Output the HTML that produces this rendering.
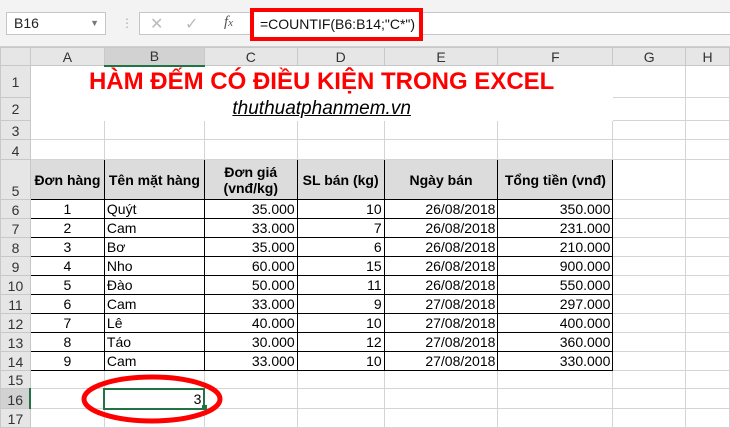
<!DOCTYPE html><html><head><meta charset="utf-8"><style>
body{margin:0;width:730px;height:427px;overflow:hidden;background:#fff;font-family:"Liberation Sans",Arial,sans-serif;position:relative}
.top{position:absolute;left:0;top:0;width:730px;height:47px;background:#f3f3f3;border-bottom:1px solid #d0d0d0;box-sizing:border-box}
.nb{position:absolute;left:6px;top:12px;width:100px;height:23px;background:#fff;border:1px solid #c6c6c6;box-sizing:border-box;font-size:14px;line-height:21px;padding-left:7px;color:#222}
.fb{position:absolute;left:139px;top:12px;width:600px;height:23px;background:#fff;border:1px solid #c6c6c6;box-sizing:border-box}
table{position:absolute;left:0;top:47px;border-collapse:collapse;table-layout:fixed;font-size:14px}
td{border:1px solid #d4d4d4;padding:0 2px;white-space:nowrap;overflow:hidden;color:#000}
td.h{background:#e6e6e6;color:#333;text-align:center;border-color:#c8c8c8}
td.r{background:#e6e6e6;color:#333;text-align:center;vertical-align:bottom;border-color:#c8c8c8}
td.b{border:1px solid #000}
td.th{background:#dcdcdc;font-weight:bold;text-align:center;border:1px solid #000}
.c{text-align:center}.rt{text-align:right}
</style></head><body>
<div class="top"></div>
<div class="nb">B16<span style="position:absolute;right:6px;top:0;font-size:9px;color:#777">▼</span></div>
<div style="position:absolute;left:121px;top:16px;color:#aaa;font-size:12px">⋮</div>
<div class="fb"><span style="position:absolute;left:10px;top:1px;color:#bbb;font-size:16px">✕</span><span style="position:absolute;left:45px;top:1px;color:#bbb;font-size:16px">✓</span><span style="position:absolute;left:84px;top:1px;font-family:'Liberation Serif';font-style:italic;color:#555;font-size:15px">f<span style="font-size:11px">x</span></span></div>
<div style="position:absolute;left:250px;top:8px;width:173px;height:33px;border:4px solid #f00;box-sizing:border-box;background:#fff;font-size:14px;line-height:25px;padding-left:6px;color:#111">=COUNTIF(B6:B14;"C*")</div>
<table>
<colgroup><col style="width:30px"><col style="width:74px"><col style="width:100px"><col style="width:93px"><col style="width:87px"><col style="width:114px"><col style="width:115px"><col style="width:73px"><col style="width:44px"></colgroup>
<tr style="height:18px"><td class="h"></td><td class="h">A</td><td class="h" style="border-bottom:2px solid #217346;background:#d2d2d2">B</td><td class="h">C</td><td class="h">D</td><td class="h">E</td><td class="h">F</td><td class="h">G</td><td class="h">H</td></tr>
<tr style="height:32px"><td class="r" style="vertical-align:middle">1</td><td colspan="6" style="color:#f00;font-weight:bold;font-size:24px;text-align:center;border-color:#fff;overflow:visible">HÀM ĐẾM CÓ ĐIỀU KIỆN TRONG EXCEL</td><td></td><td></td></tr>
<tr style="height:22px"><td class="r" style="vertical-align:middle">2</td><td colspan="6" style="font-style:italic;text-decoration:underline;font-size:19px;text-align:center;border-color:#fff">thuthuatphanmem.vn</td><td></td><td></td></tr>
<tr style="height:19px"><td class="r">3</td><td></td><td></td><td></td><td></td><td></td><td></td><td></td><td></td></tr>
<tr style="height:20px"><td class="r">4</td><td></td><td></td><td></td><td></td><td></td><td></td><td></td><td></td></tr>
<tr style="height:40px"><td class="r">5</td><td class="th">Đơn hàng</td><td class="th">Tên mặt hàng</td><td class="th">Đơn giá<br>(vnđ/kg)</td><td class="th">SL bán (kg)</td><td class="th">Ngày bán</td><td class="th">Tổng tiền (vnđ)</td><td></td><td></td></tr>
<tr style="height:19px"><td class="r">6</td><td class="b c">1</td><td class="b">Quýt</td><td class="b rt">35.000</td><td class="b rt">10</td><td class="b rt">26/08/2018</td><td class="b rt">350.000</td><td></td><td></td></tr>
<tr style="height:19px"><td class="r">7</td><td class="b c">2</td><td class="b">Cam</td><td class="b rt">33.000</td><td class="b rt">7</td><td class="b rt">26/08/2018</td><td class="b rt">231.000</td><td></td><td></td></tr>
<tr style="height:19px"><td class="r">8</td><td class="b c">3</td><td class="b">Bơ</td><td class="b rt">35.000</td><td class="b rt">6</td><td class="b rt">26/08/2018</td><td class="b rt">210.000</td><td></td><td></td></tr>
<tr style="height:19px"><td class="r">9</td><td class="b c">4</td><td class="b">Nho</td><td class="b rt">60.000</td><td class="b rt">15</td><td class="b rt">26/08/2018</td><td class="b rt">900.000</td><td></td><td></td></tr>
<tr style="height:19px"><td class="r">10</td><td class="b c">5</td><td class="b">Đào</td><td class="b rt">50.000</td><td class="b rt">11</td><td class="b rt">26/08/2018</td><td class="b rt">550.000</td><td></td><td></td></tr>
<tr style="height:19px"><td class="r">11</td><td class="b c">6</td><td class="b">Cam</td><td class="b rt">33.000</td><td class="b rt">9</td><td class="b rt">27/08/2018</td><td class="b rt">297.000</td><td></td><td></td></tr>
<tr style="height:19px"><td class="r">12</td><td class="b c">7</td><td class="b">Lê</td><td class="b rt">40.000</td><td class="b rt">10</td><td class="b rt">27/08/2018</td><td class="b rt">400.000</td><td></td><td></td></tr>
<tr style="height:19px"><td class="r">13</td><td class="b c">8</td><td class="b">Táo</td><td class="b rt">30.000</td><td class="b rt">12</td><td class="b rt">27/08/2018</td><td class="b rt">360.000</td><td></td><td></td></tr>
<tr style="height:19px"><td class="r">14</td><td class="b c">9</td><td class="b">Cam</td><td class="b rt">33.000</td><td class="b rt">10</td><td class="b rt">27/08/2018</td><td class="b rt">330.000</td><td></td><td></td></tr>
<tr style="height:18px"><td class="r">15</td><td></td><td></td><td></td><td></td><td></td><td></td><td></td><td></td></tr>
<tr style="height:20px"><td class="r" style="background:#d2d2d2;border-right:2px solid #217346">16</td><td></td><td class="rt" style="border:2px solid #217346">3</td><td></td><td></td><td></td><td></td><td></td><td></td></tr>
<tr style="height:19px"><td class="r">17</td><td></td><td></td><td></td><td></td><td></td><td></td><td></td><td></td></tr>
</table>
<svg style="position:absolute;left:0;top:0" width="730" height="427"><ellipse cx="152" cy="399" rx="68" ry="22" fill="none" stroke="#f00" stroke-width="5"/><rect x="202" y="405" width="5" height="5" fill="#217346"/></svg>
</body></html>
